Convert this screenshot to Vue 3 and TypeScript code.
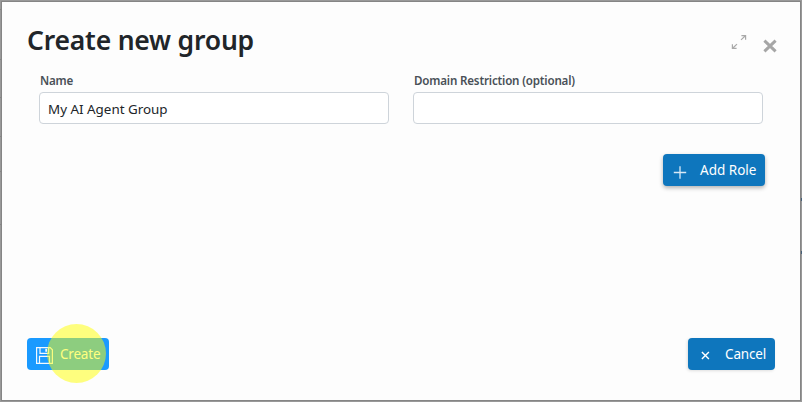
<script setup lang="ts">
import { ref } from 'vue'

const name = ref('My AI Agent Group')
const domain = ref('')
</script>

<template>
  <div class="backdrop">
    <section class="dialog" role="dialog">
      <header class="head">
        <h1 class="title"><span>Create new group</span></h1>
        <div class="tools">
          <svg class="expand" width="16" height="16" viewBox="0 0 16 16" fill="none" stroke="#a9a9a9" stroke-width="1.2">
            <path d="M10.4 1.6h4.2v4.2M14.4 1.8 10 5.9M1.4 10.2v4.2h4.2M1.6 14.2 6 10.1" />
          </svg>
          <svg class="close" width="14" height="14" viewBox="0 0 14 14" fill="none" stroke="#a6a6a6" stroke-width="3">
            <path d="M1.4 1.6l11.2 10.8M12.6 1.6 1.4 12.4" />
          </svg>
        </div>
      </header>

      <div class="fields">
        <label class="field">
          <span class="label">Name</span>
          <input v-model="name" class="input" type="text" />
        </label>
        <label class="field">
          <span class="label">Domain Restriction (optional)</span>
          <input v-model="domain" class="input" type="text" />
        </label>
      </div>

      <div class="roles">
        <button class="btn add" type="button">
          <svg width="14" height="14" viewBox="0 0 14 14" fill="none" stroke="#d9e9f6" stroke-width="1.3">
            <path d="M.8 7.5h12.4M7 1.3v12.4" />
          </svg>
          <span>Add Role</span>
        </button>
      </div>

      <footer class="foot">
        <button class="btn create" type="button">
          <svg width="17" height="17" viewBox="0 0 17 17" fill="none" stroke="#f2f8ff" stroke-width="1.2">
            <path d="M.6 .6h13.6l2.2 2.2v13.6H.6zM4 .6v5.8h8.6V.6M3.5 16.4V9.4h10v7" />
            <path d="M10.2 1.8v3" stroke-width="1.8" />
          </svg>
          <span>Create</span>
          <i class="click"></i>
        </button>
        <button class="btn cancel" type="button">
          <svg width="9" height="9" viewBox="0 0 9 9" fill="none" stroke="#fff" stroke-width="1.4">
            <path d="M.9 .9l7 7M7.9 .9l-7 7" />
          </svg>
          <span>Cancel</span>
        </button>
      </footer>
    </section>
  </div>
</template>

<style>
body {
  background: #999;
  overflow: hidden;
}
</style>

<style scoped>
.backdrop {
  box-sizing: border-box;
  width: 802px;
  height: 402px;
  padding: 2px;
  background:
    linear-gradient(#456079, #456079) 801px 198px / 1px 3px no-repeat,
    linear-gradient(#456079, #456079) 801px 251px / 1px 3px no-repeat,
    linear-gradient(#858585, #858585) 0 9px / 1px 1px no-repeat,
    linear-gradient(#858585, #858585) 0 59px / 1px 1px no-repeat,
    linear-gradient(#858585, #858585) 0 97px / 1px 1px no-repeat,
    linear-gradient(#858585, #858585) 0 136px / 1px 1px no-repeat,
    linear-gradient(#858585, #858585) 0 171px / 1px 1px no-repeat,
    linear-gradient(#858585, #858585) 0 224px / 1px 1px no-repeat,
    #999;
  font-family: 'Noto Sans', 'Open Sans', sans-serif;
}
.dialog {
  box-sizing: border-box;
  display: flex;
  flex-direction: column;
  width: 798px;
  height: 398px;
  padding: 20px 25px 30px;
  background: #fdfdfd;
  box-shadow: 0 0 0 1px #858585;
}
.head {
  display: flex;
  justify-content: space-between;
  height: 50px;
}
.title {
  margin: 0;
  color: #212529;
  font-size: 26.5px;
  font-weight: 600;
  letter-spacing: -0.2px;
  line-height: 36px;
  white-space: nowrap;
}
.tools {
  display: flex;
  align-items: flex-start;
}
.expand {
  margin: 12px 16px 0 0;
}
.close {
  margin: 17px -2px 0 0;
}
.fields {
  display: grid;
  grid-template-columns: 350px 350px;
  column-gap: 24px;
  padding-left: 12px;
}
.field {
  display: flex;
  flex-direction: column;
}
.label {
  height: 20px;
  padding-left: 1px;
  color: #495057;
  font-size: 11.6px;
  font-weight: 600;
  letter-spacing: -0.18px;
  line-height: 18px;
  white-space: nowrap;
}
.input {
  box-sizing: border-box;
  height: 32px;
  padding: 2px 8px 0;
  border: 1px solid #ced4da;
  border-radius: 4px;
  outline: none;
  background: #fff;
  color: #212529;
  font-family: inherit;
  font-size: 13.4px;
}
.roles {
  display: flex;
  justify-content: flex-end;
  padding: 30px 10px 0 0;
}
.btn {
  position: relative;
  box-sizing: border-box;
  display: flex;
  align-items: center;
  height: 32px;
  margin: 0;
  padding: 0;
  border: 0;
  border-radius: 4px;
  background: #0e76bd;
  color: #fff;
  font-family: inherit;
  font-size: 13.5px;
  line-height: 20px;
  white-space: nowrap;
}
.add {
  width: 102px;
  padding-left: 10px;
  gap: 13px;
  box-shadow: 0 2px 4px rgba(0, 0, 0, 0.3);
}
.add svg {
  margin-top: 4px;
}
.foot {
  display: flex;
  justify-content: space-between;
  margin-top: auto;
}
.create {
  width: 82px;
  padding-left: 9px;
  gap: 7px;
  background: #1a9aff;
  letter-spacing: -0.2px;
}
.create svg {
  margin-top: 2px;
}
.click {
  position: absolute;
  left: 20px;
  top: -14px;
  width: 59px;
  height: 59px;
  border-radius: 50%;
  background: rgba(255, 255, 0, 0.5);
}
.cancel {
  width: 87px;
  padding-left: 13px;
  gap: 15px;
  box-shadow: -1px 1px 3px rgba(0, 0, 0, 0.12);
  letter-spacing: -0.15px;
}
.cancel svg {
  margin-top: 2px;
}
</style>
